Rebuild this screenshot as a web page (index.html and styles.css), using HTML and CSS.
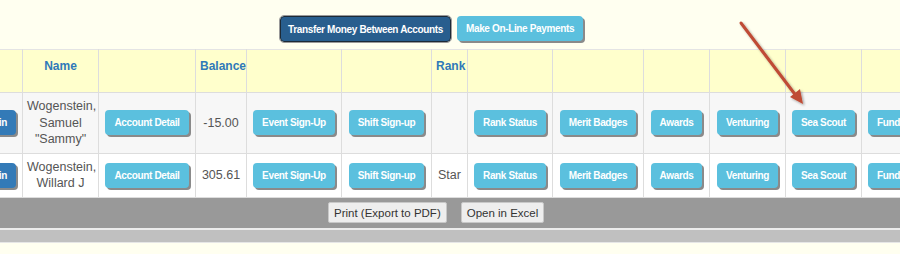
FILE: index.html
```html
<!DOCTYPE html>
<html>
<head>
<meta charset="utf-8">
<link rel="stylesheet" href="styles.css">
</head>
<body>
<div class="page">
  <div class="topbar">
    <button class="btn btn-dark">Transfer Money Between Accounts</button>
    <button class="btn btn-info">Make On-Line Payments</button>
  </div>
  <div class="tablewrap">
    <table class="grid">
      <colgroup>
        <col style="width:80px"><col style="width:76px"><col style="width:97px"><col style="width:51px"><col style="width:95px"><col style="width:90px"><col style="width:36px"><col style="width:85px"><col style="width:91px"><col style="width:66px"><col style="width:76px"><col style="width:76px"><col style="width:100px">
      </colgroup>
      <thead>
        <tr>
          <th></th><th>Name</th><th></th><th>Balance</th><th></th><th></th><th>Rank</th><th></th><th></th><th></th><th></th><th></th><th></th>
        </tr>
      </thead>
      <tbody>
        <tr class="alt">
          <td class="first"><button class="btn btn-primary">Login</button></td>
          <td>Wogenstein,<br>Samuel<br>"Sammy"</td>
          <td><button class="btn btn-info">Account Detail</button></td>
          <td>-15.00</td>
          <td><button class="btn btn-info">Event Sign-Up</button></td>
          <td><button class="btn btn-info">Shift Sign-up</button></td>
          <td></td>
          <td><button class="btn btn-info">Rank Status</button></td>
          <td><button class="btn btn-info">Merit Badges</button></td>
          <td><button class="btn btn-info">Awards</button></td>
          <td><button class="btn btn-info">Venturing</button></td>
          <td><button class="btn btn-info">Sea Scout</button></td>
          <td class="last"><button class="btn btn-info">Fundraising</button></td>
        </tr>
        <tr>
          <td class="first"><button class="btn btn-primary">Login</button></td>
          <td>Wogenstein,<br>Willard J</td>
          <td><button class="btn btn-info">Account Detail</button></td>
          <td>305.61</td>
          <td><button class="btn btn-info">Event Sign-Up</button></td>
          <td><button class="btn btn-info">Shift Sign-up</button></td>
          <td>Star</td>
          <td><button class="btn btn-info">Rank Status</button></td>
          <td><button class="btn btn-info">Merit Badges</button></td>
          <td><button class="btn btn-info">Awards</button></td>
          <td><button class="btn btn-info">Venturing</button></td>
          <td><button class="btn btn-info">Sea Scout</button></td>
          <td class="last"><button class="btn btn-info">Fundraising</button></td>
        </tr>
      </tbody>
    </table>
  </div>
  <div class="footbar">
    <button class="btn-plain">Print (Export to PDF)</button>
    <button class="btn-plain">Open in Excel</button>
  </div>
  <div class="subbar"></div>
  <svg class="arrow" width="900" height="254" viewBox="0 0 900 254">
    <defs>
      <filter id="sh" x="-20%" y="-20%" width="140%" height="140%">
        <feDropShadow dx="1.5" dy="1.5" stdDeviation="1" flood-color="#000" flood-opacity="0.35"/>
      </filter>
    </defs>
    <g filter="url(#sh)">
      <line x1="741" y1="23" x2="797" y2="97" stroke="#bf4b35" stroke-width="3" stroke-linecap="round"/>
      <polygon points="803,104 790,97 800,89" fill="#bf4b35"/>
    </g>
  </svg>
</div>
</body>
</html>
```

FILE: styles.css
```css
html, body {
  margin: 0;
  padding: 0;
  background: #fffff0;
}
body {
  font-family: "Liberation Sans", Arial, sans-serif;
  color: #555;
}
.page {
  position: relative;
  width: 900px;
  height: 254px;
  overflow: hidden;
}
.topbar {
  display: flex;
  gap: 6px;
  padding: 16px 0 0 280px;
  height: 33px;
}
.btn {
  font-family: "Liberation Sans", Arial, sans-serif;
  font-weight: bold;
  font-size: 10px;
  letter-spacing: -0.35px;
  color: #fff;
  border: 0;
  border-radius: 4px;
  height: 25px;
  padding: 0 9px;
  white-space: nowrap;
  cursor: pointer;
}
.btn-info {
  background: #5bc0de;
  box-shadow: 2px 2px 0 #8a8a8a;
}
.btn-primary {
  background: #337ab7;
  box-shadow: 2px 2px 0 #8a8a8a;
}
.btn-dark {
  background: #285e8e;
  border: 1px solid #1d2a36;
  outline: 1px solid #9a9a9a;
  height: 26px;
  padding: 0 7px;
}
.tablewrap {
  width: 900px;
  overflow: hidden;
}
.grid {
  border-collapse: collapse;
  table-layout: fixed;
  width: 1019px;
  margin-left: -58px;
}
.grid th, .grid td {
  border: 1px solid #dddddd;
  text-align: center;
  vertical-align: middle;
  padding: 5px 4px;
  font-size: 12.5px;
  line-height: 16.5px;
}
.grid th {
  background: #ffffcc;
  color: #2f79b9;
  font-weight: bold;
  font-size: 12px;
  vertical-align: top;
  height: 29px;
  padding-top: 8px;
  border-top: 1px solid #e4e4e4;
}
.grid tbody tr {
  background: #fff;
}
.grid tbody tr.alt {
  background: #f7f7f7;
}
.grid td.first {
  text-align: right;
  padding-right: 6px;
}
.grid td.last {
  text-align: left;
  padding-left: 6px;
}
.footbar {
  background: #999999;
  height: 30px;
  display: flex;
  align-items: center;
  gap: 14px;
  padding-left: 328px;
  border-bottom: 2px solid #ececec;
}
.btn-plain {
  font-family: "Liberation Sans", Arial, sans-serif;
  font-size: 11.5px;
  color: #333;
  background: #eeeeee;
  border: 1px solid #c8c8c8;
  border-radius: 2px;
  height: 21px;
  padding: 0 5px;
}
.subbar {
  background: #c0c0c0;
  height: 12px;
  border-bottom: 1px solid #e6e6e6;
}
.arrow {
  position: absolute;
  left: 0;
  top: 0;
  pointer-events: none;
}
```
